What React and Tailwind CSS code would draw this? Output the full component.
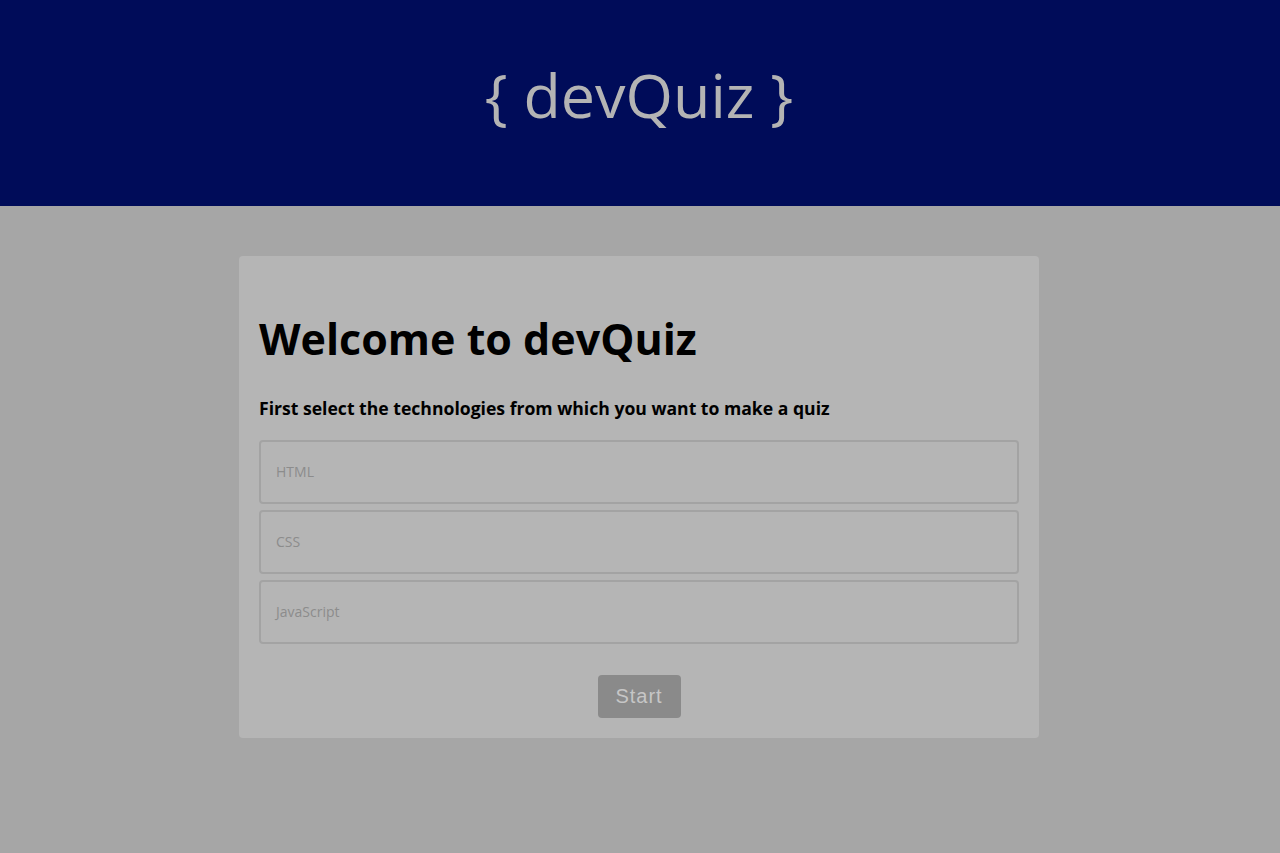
export default function App() {
  return (
    <div className="min-h-[853px] bg-[#a6a6a6]" style={{ fontFamily: '"Open Sans", "Noto Sans", sans-serif' }}>
      <header className="h-[206px] bg-[#000c59] flex items-center justify-center">
        <h1 className="text-[61px] leading-none text-[#b4b4b4] font-normal -mt-[18px] ml-[-2px]" style={{ fontFamily: '"Open Sans", "Noto Sans", sans-serif' }}>
          {"{ devQuiz }"}
        </h1>
      </header>
      <main className="flex justify-center pt-[50px] pr-[2px]">
        <div className="w-[800px] bg-[#b5b5b5] rounded-[4px] px-[20px] pt-[61px] pb-[20px]">
          <h2 className="text-[43px] font-bold leading-none text-black">Welcome to devQuiz</h2>
          <p className="mt-[40px] text-[17.6px] font-bold text-black leading-none">
            First select the technologies from which you want to make a quiz
          </p>
          <div className="mt-[22px] flex flex-col gap-[6px]">
            {["HTML", "CSS", "JavaScript"].map((t) => (
              <div key={t} className="h-[64px] border-2 border-[#a3a3a3] rounded-[4px] flex items-center px-[15px] text-[14px] text-[#8c8c8c]">
                {t}
              </div>
            ))}
          </div>
          <div className="flex justify-center mt-[31px]">
            <button className="w-[83px] h-[43px] bg-[#8a8a8a] rounded-[4px] text-[20px] text-[#c6c6c6] tracking-[1px]" style={{ fontFamily: '"Liberation Sans", Arial, sans-serif' }}>
              Start
            </button>
          </div>
        </div>
      </main>
    </div>
  );
}
